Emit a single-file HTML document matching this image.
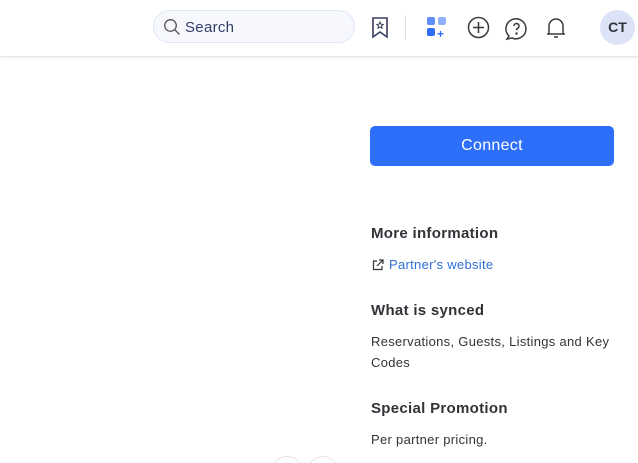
<!DOCTYPE html>
<html><head><style>
html,body{margin:0;width:638px;height:463px;overflow:hidden;background:#fff;font-family:"Liberation Sans",sans-serif;color:#323338;position:relative}
.top{position:absolute;left:0;top:0;width:638px;height:56px;background:#fff;border-bottom:1px solid #e6e6e6;box-shadow:0 1px 3px rgba(0,0,0,.08)}
.search{position:absolute;left:153px;top:10px;width:202px;height:33px;border:1px solid #dfe5f5;border-radius:17px;background:#f7f8fd;box-sizing:border-box}
.search span{position:absolute;left:31px;top:8px;font-size:15px;color:#323d66;letter-spacing:.3px}
.av{position:absolute;left:600px;top:10px;width:35px;height:35px;border-radius:50%;background:#dde3f6;font-weight:bold;font-size:14px;text-align:center;line-height:35px;color:#323338}
.btn{position:absolute;left:370px;top:126px;width:244px;height:40px;background:#2e6ffa;border-radius:5px;color:#fff;font-size:16px;text-align:center;line-height:40px;letter-spacing:.3px}
h3{position:absolute;left:371px;margin:0;font-size:15px;font-weight:bold;color:#323338;letter-spacing:.3px}
p{position:absolute;left:371px;margin:0;font-size:13px;line-height:21px;color:#323338;letter-spacing:.3px}
</style></head><body>
<div class="top">
<div class="search"><svg style="position:absolute;left:9px;top:7px" width="18" height="18" viewBox="0 0 18 18" fill="none" stroke="#555" stroke-width="1.3"><circle cx="7.5" cy="7.5" r="5.8"/><path d="M12 12l4.5 4.5"/></svg><span>Search</span></div>
<svg style="position:absolute;left:371px;top:16px" width="18" height="24" viewBox="0 0 18 24" fill="none" stroke="#3a3f5c" stroke-width="1.6"><path d="M2 2h14v19l-7-5-7 5z"/><path d="M9 6l1 2.2 2.3.2-1.8 1.5.6 2.3L9 11l-2 1.2.6-2.3L5.8 8.4l2.2-.2z" stroke-width="1"/></svg>
<div style="position:absolute;left:405px;top:15px;width:1px;height:25px;background:#e0e0e0"></div>
<div style="position:absolute;left:427px;top:17px;width:8px;height:8px;background:#5e8efa;border-radius:2px"></div>
<div style="position:absolute;left:438px;top:17px;width:8px;height:8px;background:#8fb0fb;border-radius:2px"></div>
<div style="position:absolute;left:427px;top:28px;width:8px;height:8px;background:#2e6ffa;border-radius:2px"></div>
<div style="position:absolute;left:437px;top:27px;font-size:12px;color:#2e6ffa;font-weight:bold">+</div>
<svg style="position:absolute;left:467px;top:16px" width="23" height="23" viewBox="0 0 23 23" fill="none" stroke="#3a3a3a" stroke-width="1.5"><circle cx="11.5" cy="11.5" r="10"/><path d="M11.5 6v11M6 11.5h11"/></svg>
<svg style="position:absolute;left:504px;top:16px" width="25" height="25" viewBox="0 0 25 25" fill="none" stroke="#3a3a3a" stroke-width="1.5"><path d="M5 20A10 10 0 1 1 8 22L3 23z"/><path d="M10 10a2.5 2.5 0 1 1 3.5 2.3c-1 .5-1 1-1 2"/><circle cx="12.5" cy="17.5" r=".5"/></svg>
<svg style="position:absolute;left:545px;top:16px" width="22" height="24" viewBox="0 0 22 24" fill="none" stroke="#3a3a3a" stroke-width="1.5"><path d="M4 18V10a7 7 0 0 1 14 0v8zM2 18h18M9 21h4"/></svg>
<div class="av">CT</div>
</div>
<div class="btn">Connect</div>
<h3 style="top:225px">More information</h3>
<svg style="position:absolute;left:372px;top:259px" width="12" height="12" viewBox="0 0 12 12" fill="none" stroke="#333" stroke-width="1.2"><path d="M5 2H1.5v8.5H10V7M7 1h4v4M11 1L5 7"/></svg>
<p style="top:254px;left:389px;color:#2f6fd8">Partner's website</p>
<h3 style="top:302px">What is synced</h3>
<p style="top:331px">Reservations, Guests, Listings and Key<br>Codes</p>
<h3 style="top:400px">Special Promotion</h3>
<p style="top:429px">Per partner pricing.</p>
<div style="position:absolute;left:271px;top:456px;width:30px;height:30px;border:1px solid #e5e5e5;border-radius:50%"></div>
<div style="position:absolute;left:307px;top:456px;width:30px;height:30px;border:1px solid #e5e5e5;border-radius:50%"></div>
</body></html>
